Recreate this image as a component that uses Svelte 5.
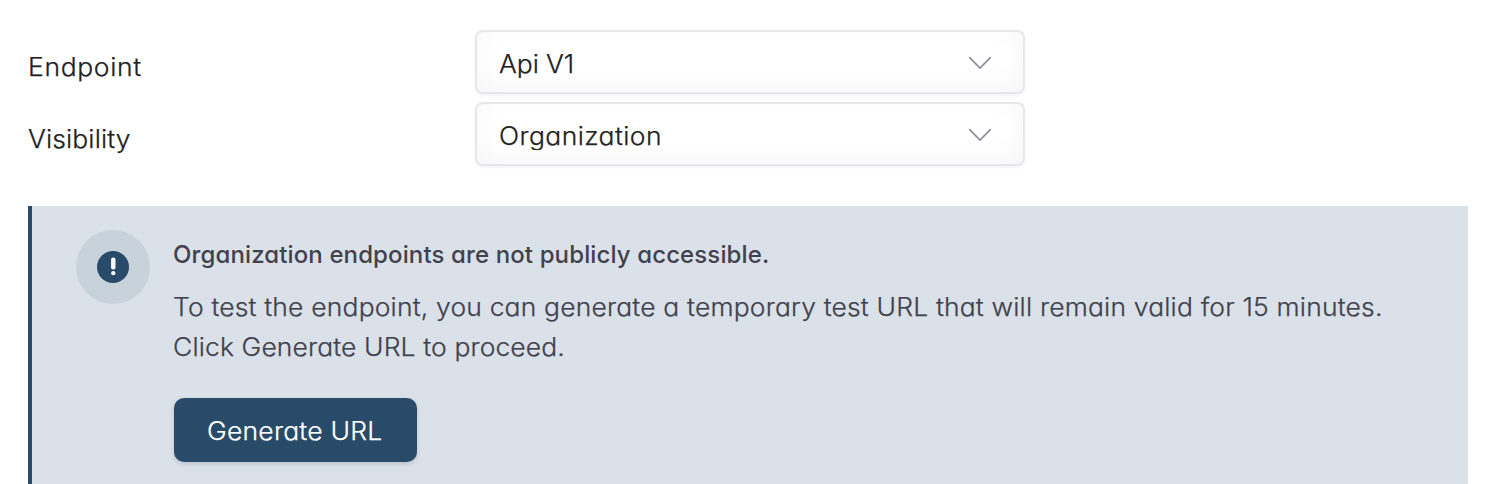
<script>
  const fields = [
    { label: 'Endpoint', value: 'Api V1', labelSpacing: 0.6, valueSpacing: -0.08 },
    { label: 'Visibility', value: 'Organization', labelSpacing: 0.1, valueSpacing: 0.37 }
  ];
</script>

<main>
  <section class="form">
    {#each fields as field}
      <div class="row">
        <div class="label"><span class="wide" style="letter-spacing: {field.labelSpacing}px">{field.label}</span></div>
        <div class="select">
          <span class="wide value" style="letter-spacing: {field.valueSpacing}px">{field.value}</span>
          <svg width="24" height="14" viewBox="0 0 24 14" fill="none" stroke="#8d8d9d" stroke-width="1.7"><path d="M1.2 1.2 12 12 22.8 1.2" /></svg>
        </div>
      </div>
    {/each}
  </section>
  <section class="notice">
    <div class="badge">
      <svg width="32" height="32" viewBox="0 0 32 32"><circle cx="16" cy="16" r="16" fill="#274b69" /><rect x="14.1" y="6.4" width="4.4" height="12.2" rx="2" fill="#fff" /><circle cx="16.3" cy="22.2" r="2.1" fill="#fff" /></svg>
    </div>
    <div class="content">
      <h2>Organization endpoints are not publicly accessible.</h2>
      <p><span class="wide first">To test the endpoint, you can generate a temporary test URL that will remain valid for 15 minutes.</span><br /><span class="wide second">Click Generate URL to proceed.</span></p>
      <button><span class="wide">Generate URL</span></button>
    </div>
  </section>
</main>

<style>
  :global(body) { background: #fff; overflow: hidden; }
  main { box-sizing: border-box; height: 484px; padding: 30px 32px 0 28px; font-family: Inter, sans-serif; font-size: 25px; font-weight: 300; font-feature-settings: 'cv11'; color: #222; display: flex; flex-direction: column; overflow: hidden; }
  .wide { display: inline-block; transform: scaleX(1.06); transform-origin: left center; -webkit-text-stroke: 0.25px currentColor; }
  .form { display: flex; flex-direction: column; gap: 8px; }
  .row { display: grid; grid-template-columns: 447px 550px; height: 64px; }
  .label { padding-top: 10px; line-height: 54px; }
  .select { box-sizing: border-box; border: 2px solid #e6e6eb; border-radius: 8px; display: flex; align-items: center; justify-content: space-between; padding: 3px 31px 0 22px; box-shadow: inset 0 -6px 24px #f6f6f7, 0 2px 3px #f5f5f7; }
  .value { height: 29px; line-height: 31px; overflow: hidden; }
  .select svg { margin-top: -2px; }
  .notice { box-sizing: border-box; margin-top: 40px; height: 278px; flex: none; border-left: 4px solid #274b69; background: #dae1e8; padding: 24px 0 0 44px; display: flex; gap: 24px; color: #42424e; }
  .badge { width: 74px; height: 74px; border-radius: 50%; background: #c8d2db; display: flex; align-items: center; justify-content: center; }
  .content { white-space: nowrap; }
  h2 { margin: 0 0 0 -1px; padding-top: 9px; font-size: 24px; font-weight: 500; line-height: 32px; letter-spacing: 0.12px; }
  p { margin: 16px 0 0 -1px; line-height: 40px; }
  .first { letter-spacing: 0.15px; }
  .second { letter-spacing: 0.1px; }
  button { margin-top: 31px; padding: 1px 1px 0 0; display: flex; align-items: center; justify-content: center; width: 243px; height: 64px; border: 0; border-radius: 10px; background: #274b69; color: #fff; font: inherit; font-feature-settings: inherit; letter-spacing: 0.2px; box-shadow: 0 2px 4px #b9c2ca; }
  button .wide { transform-origin: center; }
</style>
